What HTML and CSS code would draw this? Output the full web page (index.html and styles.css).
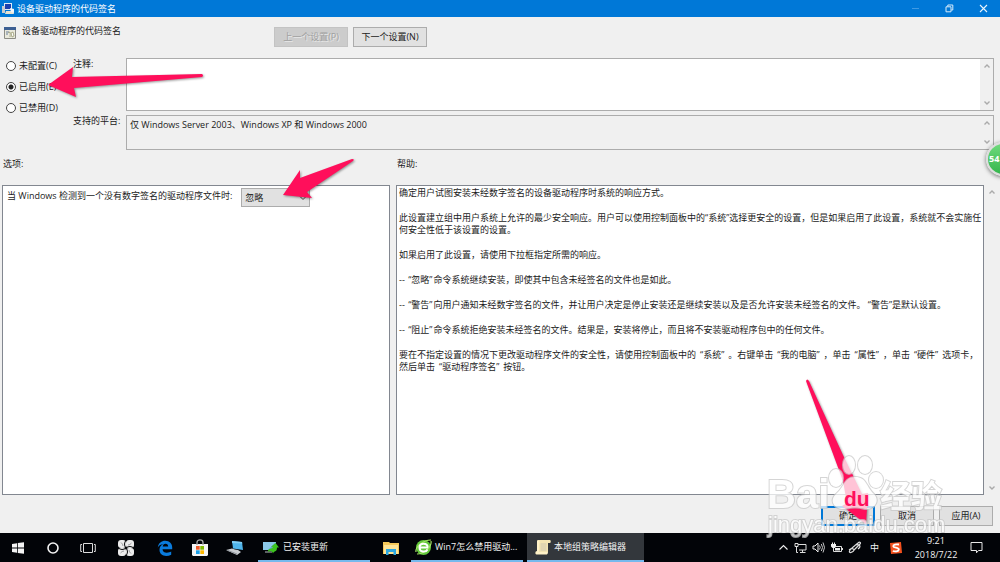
FILE: index.html
```html
<!DOCTYPE html>
<html lang="zh-CN">
<head>
  <meta charset="UTF-8" />
  <meta name="viewport" content="width=device-width, initial-scale=1.0" />
  <title>设备驱动程序的代码签名</title>
  <link rel="stylesheet" href="styles.css">
</head>
<body>
  <header class="titlebar">
    <svg class="title-icon" width="13" height="13" viewBox="0 0 13 13">
      <path d="M2 1h8v7H2z" fill="#dfe9f5"/><path d="M3 2h6v5H3z" fill="#1b3fae"/>
      <path d="M0 4h3v7H0z" fill="#c9ccd0"/><path d="M4 9h7l1 3H3z" fill="#e8e2d0"/><path d="M8 6l4 1v4l-3-1z" fill="#f2f4f8"/>
    </svg>
    <h1>设备驱动程序的代码签名</h1>
    <div class="window-buttons">
      <button aria-label="最小化" disabled><svg width="9" height="9" viewBox="0 0 9 9"><path d="M1 4.5h7" stroke="#3f9ae4"/></svg></button>
      <button aria-label="还原"><svg width="9" height="9" viewBox="0 0 9 9"><path d="M1 2.8h5v5H1zM2.8 2.5V1h5v5H6.2" fill="none" stroke="#d8ecfb"/></svg></button>
      <button aria-label="关闭"><svg width="9" height="9" viewBox="0 0 9 9"><path d="M1 1l7 7M8 1L1 8" stroke="#e8f4fd" stroke-width="1.1"/></svg></button>
    </div>
  </header>

  <main class="dialog">
    <div class="policy-head">
      <div class="policy-name">
        <svg width="12" height="12" viewBox="0 0 12 12">
          <path d="M.5.5h11v11H.5z" fill="#e9e9dc" stroke="#8d8d86"/><path d="M0 0h12v3H0z" fill="#3d5f92"/>
          <path d="M2 5h3M2 7h2" stroke="#6b7f9c"/><path d="M4 6l2-1v5M7 6l2-1 1 4-2 1z" fill="#fff" stroke="#8b8d5f" stroke-width=".7"/>
        </svg>
        <h2>设备驱动程序的代码签名</h2>
      </div>
      <button class="btn nav-btn" disabled>上一个设置(P)</button>
      <button class="btn nav-btn">下一个设置(N)</button>
    </div>

    <div class="state">
      <div class="radios">
        <label><input type="radio" name="state"> 未配置(C)</label>
        <label><input type="radio" name="state" checked> 已启用(E)</label>
        <label><input type="radio" name="state"> 已禁用(D)</label>
      </div>
      <div class="fields">
        <label for="comment">注释:</label>
        <div class="scroll-box comment">
          <textarea id="comment"></textarea>
          <div class="scrollbar">
            <svg width="8" height="6" viewBox="0 0 8 6"><path d="M1.500 4.500L4 2l2.500 2.500"/></svg>
            <svg width="8" height="6" viewBox="0 0 8 6"><path d="M1.500 1.500L4 4l2.500-2.500"/></svg>
          </div>
        </div>
        <label for="platform">支持的平台:</label>
        <div class="scroll-box platform">
          <textarea id="platform" readonly>仅 Windows Server 2003、Windows XP 和 Windows 2000</textarea>
          <div class="scrollbar">
            <svg width="8" height="6" viewBox="0 0 8 6"><path d="M1.500 4.500L4 2l2.500 2.500"/></svg>
            <svg width="8" height="6" viewBox="0 0 8 6"><path d="M1.500 1.500L4 4l2.500-2.500"/></svg>
          </div>
        </div>
      </div>
    </div>

    <div class="panels">
      <section class="options">
        <h3>选项:</h3>
        <div class="panel option-row">
          <label for="action">当 Windows 检测到一个没有数字签名的驱动程序文件时:</label>
          <div class="select-wrap">
            <select id="action">
              <option>忽略</option>
              <option>警告</option>
              <option>阻止</option>
            </select>
            <svg width="8" height="6" viewBox="0 0 8 6"><path d="M1 1.500L4 4.500l3-3"/></svg>
          </div>
        </div>
      </section>
      <section class="help">
        <h3>帮助:</h3>
        <div class="help-body">
          <div class="panel help-text">
            <p>确定用户试图安装未经数字签名的设备驱动程序时系统的响应方式。</p>
            <p>此设置建立组中用户系统上允许的最少安全响应。用户可以使用控制面板中的“系统”选择更安全的设置，但是如果启用了此设置，系统就不会实施任<br>何安全性低于该设置的设置。</p>
            <p>如果启用了此设置，请使用下拉框指定所需的响应。</p>
            <p>-- <span class="term">“忽略”</span>命令系统继续安装，即使其中包含未经签名的文件也是如此。</p>
            <p>-- <span class="term">“警告”</span>向用户通知未经数字签名的文件，并让用户决定是停止安装还是继续安装以及是否允许安装未经签名的文件。 “警告”是默认设置。</p>
            <p>-- <span class="term">“阻止”</span>命令系统拒绝安装未经签名的文件。结果是，安装将停止，而且将不安装驱动程序包中的任何文件。</p>
            <p class="steps">要在不指定设置的情况下更改驱动程序文件的安全性，请使用控制面板中的<span class="term">“系统”</span>。右键单击<span class="term">“我的电脑”</span>，单击<span class="term">“属性”</span>，单击<span class="term">“硬件”</span>选项卡，<br>然后单击<span class="term">“驱动程序签名”</span>按钮。</p>
          </div>
          <div class="scrollbar">
            <svg width="8" height="6" viewBox="0 0 8 6"><path d="M1.500 4.500L4 2l2.500 2.500"/></svg>
            <svg width="8" height="6" viewBox="0 0 8 6"><path d="M1.500 1.500L4 4l2.500-2.500"/></svg>
          </div>
        </div>
      </section>
    </div>

    <div class="actions">
      <button class="btn primary">确定</button>
      <button class="btn">取消</button>
      <button class="btn">应用(A)</button>
    </div>
  </main>

  <footer class="taskbar">
    <nav class="launchers">
      <button aria-label="开始"><svg width="14" height="14" viewBox="0 0 14 14"><path d="M1 3l5-.8v4.400H1zM6.800 2.100L13 1.200v5.400H6.800zM1 7.400h5v4.400L1 11zM6.800 7.400H13v5.400l-6.200-.9z" fill="#f4f4f4"/></svg></button>
      <button aria-label="搜索"><svg width="14" height="14" viewBox="0 0 14 14"><circle cx="7" cy="7" r="5" fill="none" stroke="#f4f4f4" stroke-width="1.600"/></svg></button>
      <button aria-label="任务视图"><svg width="16" height="14" viewBox="0 0 16 14"><path d="M3.500 2.500h9v9h-9zM2 3.500H.7v7H2M14 3.500h1.300v7H14" fill="none" stroke="#dcdcdc"/></svg></button>
      <button aria-label="浏览器" class="wide"><svg width="18" height="18" viewBox="0 0 18 18">
        <g fill="#ececec"><rect x="1" y="1" width="8" height="8" rx="3"/><rect x="9" y="1" width="8" height="8" rx="3"/><rect x="9" y="9" width="8" height="8" rx="3"/><rect x="1" y="9" width="8" height="8" rx="3"/></g>
        <path d="M9 9C7 7 7 3 9.500 1M9 9c2-2 6-2 8 .5M9 9c2 2 2 6-.5 8M9 9c-2 2-6 2-8-.5" fill="none" stroke="#050608"/>
        <path d="M11 6q2 0 3.500-2M12 11q0 2 2 3.500M7 12q-2 0-3.500 2M6 7q0-2-2-3.500" fill="none" stroke="#77797c" stroke-width=".7"/>
      </svg></button>
      <button aria-label="Edge"><svg width="16" height="16" viewBox="0 0 16 16"><path d="M.8 7.500C1.500 3 4.500.8 8.200.8c4.500 0 7 3 7 6.700v1.800H5.500c.2 2.500 2 3.400 4.300 3.400 1.700 0 3.200-.5 4.400-1.200v3.200c-1.500.8-3.200 1.200-5 1.200-4 0-6.700-2.300-6.700-6.200 0-2.500 1.500-4.700 3.800-5.600C3.800 4.400 2 5.500.8 7.500zM5.700 6.500h5.500c0-1.700-.9-2.800-2.600-2.800S5.900 4.800 5.700 6.500z" fill="#0a7bdc"/></svg></button>
      <button aria-label="应用商店"><svg width="18" height="18" viewBox="0 0 18 18"><path d="M1 5h16v11l-1 1H2l-1-1z" fill="#f5f5f5"/><path d="M6 6V3.500C6 0 12 0 12 3.500V6" fill="none" stroke="#a9a9a9" stroke-width="1.300"/><path d="M5 7h3.700v3.700H5z" fill="#f05a28"/><path d="M9.300 7H13v3.700H9.300z" fill="#7fba00"/><path d="M5 11.300h3.700V15H5z" fill="#1ba0e8"/><path d="M9.300 11.300H13V15H9.300z" fill="#ffb900"/></svg></button>
      <button aria-label="此电脑"><svg width="18" height="16" viewBox="0 0 18 16"><path d="M6 1l10 1 1 8-10-1.500z" fill="#4fb4ea"/><path d="M6 1l10 1 .3 1.500L6 3z" fill="#82cdf3"/><path d="M0 10l6-1.500 3 1 3 .5 3 2-4 3z" fill="#c9cdd1"/><path d="M2 10.500l9 3.500" stroke="#8b9096"/></svg></button>
    </nav>
    <div class="tasks">
      <button class="task">
        <svg width="18" height="16" viewBox="0 0 18 16"><path d="M1 3h13v8H1z" fill="#62a9d4"/><path d="M1 3h13L6 11H1z" fill="#8bc8e8"/><path d="M3 13h7" stroke="#b8bcc0"/><path d="M6 13c0-5 4-2 5-5l-2-.3L13.500 4 17 8.500h-2c0 5-3 3-4 6-1-3-3-3-5-1.500z" fill="#3cc41f"/></svg>
        <span>已安装更新</span>
      </button>
      <button class="folder" aria-label="文件资源管理器"><svg width="16" height="14" viewBox="0 0 16 14"><path d="M0 1h6l1 1h9v11H0z" fill="#f5c95a"/><path d="M1 4h14v9H1z" fill="#ffe597"/><path d="M3 14V8h10v6h-2.500v-3h-5v3z" fill="#2da8e1"/></svg></button>
      <button class="task">
        <svg width="17" height="17" viewBox="0 0 17 17"><circle cx="8.500" cy="8.500" r="7.500" fill="#63c83c"/><path d="M1 13C0 8 8 1 16 1M16 2c1 5-6 13-14 13" fill="none" stroke="#a5e464" stroke-width="1.200"/><path d="M13 8.500H4.500M4.500 8.500c0-5 8.200-5 8.200 0M4.500 8.500c0 5 6.500 5 8 2" fill="none" stroke="#fff" stroke-width="2"/></svg>
        <span>Win7怎么禁用驱动...</span>
      </button>
      <button class="task active">
        <svg width="16" height="16" viewBox="0 0 16 16"><path d="M3 1h12c1 0 1 3 0 3h-2v9H4z" fill="#f4e5b3"/><path d="M2.500 1C5 1 5 4 4 5v8h9c0 2-1 2.500-2 2.500H1.500C0 15.500 0 12 2 12V2z" fill="#fff2c8"/><path d="M5.500 5h6M5.500 7h6M5.500 9h6M5.500 11h6" stroke="#c5bfae" stroke-width=".8"/></svg>
        <span>本地组策略编辑器</span>
      </button>
    </div>
    <div class="tray">
      <svg width="11" height="13" viewBox="0 0 11 13"><path d="M1.500 8.500l4-4 4 4" fill="none" stroke="#eee" stroke-width="1.100"/></svg>
      <svg width="13" height="13" viewBox="0 0 13 13"><path d="M4 3.500h8v5.500H5M8.500 9v2.500M6 11.500h5.500M1 2.500h3v3H1zM2.500 5.500v6H4" fill="none" stroke="#ddd"/></svg>
      <svg width="13" height="13" viewBox="0 0 13 13"><path d="M1 5h2l3-3v9L3 8H1z" fill="none" stroke="#eee"/><path d="M7.500 4.500q1.500 2 0 4M9.300 3q2.500 3.500 0 7M11 1.500q3 5 0 10" fill="none" stroke="#ddd" stroke-width=".9"/></svg>
      <svg width="13" height="13" viewBox="0 0 13 13"><path d="M3.500 5.500h8v5h-8zM12.500 7v2" fill="none" stroke="#ddd"/><path d="M5 7h5v2.500H5zM1 3h5v2.500L5 7H2.500L1 5.500z" fill="#eee"/><path d="M2.500 1.500V3M4.500 1.500V3" stroke="#eee"/></svg>
      <svg width="14" height="13" viewBox="0 0 14 13"><path d="M1 9c4-3 7 0 3 2s-3-2 0-4l6-5c2-2 3 0 2 1L6 9M7 4c4-1 7 1 3 4" fill="none" stroke="#ddd" stroke-width="1.200"/></svg>
      <span class="ime">中</span>
      <svg class="sogou" width="12" height="12" viewBox="0 0 12 12"><path d="M0 1l11-1 1 11-11 1z" fill="#f4511e"/><path d="M9 2.500C6 2 3 2.500 3.300 4.300 3.500 6 9 5.500 8.800 7.500 8.500 9.500 5 9.800 2.800 9" fill="none" stroke="#fff" stroke-width="1.800"/></svg>
      <time class="clock"><span>9:21</span><span>2018/7/22</span></time>
      <svg width="13" height="13" viewBox="0 0 13 13"><path d="M1 1.500h11v8H8.500L6.500 11.800V9.500H1z" fill="none" stroke="#e8e8e8"/></svg>
    </div>
  </footer>

  <svg class="arrow arrow-enabled" width="160" height="36" viewBox="0 0 160 36"><path d="M2 20L27 2l-1 10L156 9q2 1.500 0 3L28 23l2 9z"/></svg>
  <svg class="arrow arrow-select" width="76" height="44" viewBox="0 0 76 44"><path d="M3 37L20 12v8L72 1q3 0 1 2L27 34l5 6z"/></svg>
  <svg class="arrow arrow-ok" width="68" height="148" viewBox="0 0 68 148"><path d="M1 2q1-3 3 0L38 76l19 39 6-1-2 31-24-18 5-3-4-22z"/></svg>

  <svg class="watermark" width="184" height="88" viewBox="0 0 184 88">
    <g class="mark">
      <ellipse cx="72" cy="28" rx="7" ry="9"/>
      <ellipse cx="85" cy="15" rx="6" ry="9"/>
      <ellipse cx="101" cy="15" rx="7" ry="9"/>
      <ellipse cx="112" cy="30" rx="7" ry="8"/>
      <path d="M91 27c12 0 11 10 19 17 7 8-1 16-9 15-8-2-12-2-20 0-9 1-17-7-9-15 8-6 8-17 19-17z"/>
      <text class="brand" x="3" y="58">Bai</text>
      <text class="brand-cn" x="116" y="57">经验</text>
      <text class="site" x="4" y="82">jingyan.baidu.com</text>
    </g>
    <text class="du" x="80" y="56">du</text>
  </svg>
  <button class="badge" aria-label="54%">54</button>
</body>
</html>
```
FILE: styles.css
```css
:root {
  --bg: #f0f0f0;
  --blue: #0078d7;
  --border: #acacac;
  --button: #e1e1e1;
  --pink: #ff0f5b;
  --text: #1a1a1a;
}

* {
  box-sizing: border-box;
}

body {
  margin: 0;
  min-height: 100vh;
  position: relative;
  display: flex;
  flex-direction: column;
  overflow: hidden;
  background: var(--bg);
  color: var(--text);
  font: 9px/12px "Open Sans", "Noto Sans CJK SC", sans-serif;
}

h1, h2, h3, p {
  margin: 0;
  font-size: 9px;
  font-weight: normal;
}

button, select, textarea {
  font: inherit;
  color: inherit;
}

button {
  padding: 0;
  border: none;
  background: none;
}

/* title bar */
.titlebar {
  display: flex;
  align-items: center;
  height: 17px;
  padding-left: 2px;
  background: var(--blue);
  color: #fff;
}
.titlebar h1 {
  margin-left: 2px;
}
.window-buttons {
  display: flex;
  margin-left: auto;
}
.window-buttons button {
  display: flex;
  align-items: center;
  justify-content: center;
  width: 34px;
  height: 16px;
}

/* dialog */
.dialog {
  flex: 1;
  display: flex;
  flex-direction: column;
}
.policy-head {
  display: flex;
  gap: 5px;
  padding: 10px 4px 0;
}
.policy-name {
  display: flex;
  gap: 6px;
  width: 265px;
}
.policy-name h2 {
  margin-top: -2px;
}
.btn {
  height: 20px;
  background: var(--button);
  border: 1px solid var(--border);
  line-height: 16px;
}
.btn:disabled {
  background: #ccc;
  border-color: #c3c3c3;
  color: #a0a0a0;
  text-shadow: 1px 1px #e8e8e8;
}
.nav-btn {
  width: 74px;
}
.policy-name svg {
  flex: none;
}

.state {
  display: flex;
  padding: 11px 6px 0;
}
.radios {
  display: flex;
  flex-direction: column;
  gap: 9px;
  width: 67px;
  padding-top: 2px;
}
.radios label {
  display: flex;
  align-items: center;
  gap: 3px;
  white-space: nowrap;
}
.radios input {
  appearance: none;
  width: 10px;
  height: 10px;
  margin: 0;
  border: 1px solid #444;
  border-radius: 50%;
  background: #fff;
}
.radios input:checked {
  background: radial-gradient(circle, #222 2px, #fff 3px);
}
.fields {
  flex: 1;
  display: grid;
  grid-template-columns: 53px 1fr;
  row-gap: 4px;
}
.scroll-box {
  display: flex;
  border: 1px solid var(--border);
}
.comment {
  height: 53px;
  background: #fff;
}
.platform {
  height: 35px;
}
.scroll-box textarea {
  flex: 1;
  border: none;
  outline: none;
  resize: none;
  padding: 3px;
  background: none;
  overflow: hidden;
}
.scrollbar {
  display: flex;
  flex-direction: column;
  align-items: center;
  justify-content: space-between;
  width: 13px;
  padding: 4px 0;
  background: var(--bg);
}
.scrollbar path, .select-wrap path {
  fill: none;
  stroke: #aaa;
  stroke-width: 1.4;
}

.panels {
  flex: 1;
  display: grid;
  grid-template-columns: 388fr 604fr;
  gap: 6px;
  padding: 8px 0 0 2px;
}
.options, .help {
  display: flex;
  flex-direction: column;
}
.panels h3 {
  padding-left: 1px;
  margin-bottom: 15px;
}
.panel {
  flex: 1;
  border: 1px solid #828790;
  background: #fff;
}
.option-row {
  display: flex;
  align-items: flex-start;
  gap: 9px;
  padding: 2px 4px;
}
.option-row label {
  margin-top: 2px;
  white-space: nowrap;
}
.select-wrap {
  position: relative;
  display: flex;
}
.select-wrap select {
  appearance: none;
  width: 69px;
  height: 19px;
  padding: 0 3px;
  border: 1px solid var(--border);
  border-radius: 0;
  background: var(--button);
}
.select-wrap svg {
  position: absolute;
  right: 3px;
  top: 7px;
}
.select-wrap path {
  stroke: #444;
  stroke-width: 1;
}
.help-body {
  flex: 1;
  display: flex;
}
.help-body .scrollbar {
  width: 16px;
}
.help-text {
  padding: 1px 0 2px 2px;
  white-space: nowrap;
}
.help-text p + p {
  margin-top: 13px;
}
.term {
  margin: 0 1px;
}
.steps .term {
  margin: 0 4px;
}

.actions {
  display: flex;
  justify-content: flex-end;
  gap: 5px;
  padding: 11px 7px 7px;
}
.actions .btn {
  width: 54px;
}
.actions .primary {
  border: 2px solid var(--blue);
}

/* taskbar */
.taskbar {
  display: flex;
  height: 29px;
  background: #020408;
  color: #f2f2f2;
}
.launchers {
  display: flex;
  width: 258px;
}
.launchers button {
  display: flex;
  align-items: center;
  justify-content: center;
  width: 35px;
}
.launchers button.wide {
  width: 42px;
}
.tasks {
  display: flex;
  gap: 4px;
}
.task {
  display: flex;
  align-items: center;
  gap: 3px;
  width: 112px;
  padding: 1px 4px 0;
  border-bottom: 2px solid #76b9ed;
  white-space: nowrap;
}
.task.active {
  width: 117px;
  padding-left: 8px;
  background: #33373c;
}
.folder {
  display: flex;
  align-items: center;
  justify-content: center;
  width: 33px;
}
.tray {
  display: flex;
  align-items: center;
  gap: 5px;
  margin-left: auto;
  padding-right: 17px;
}
.ime {
  margin-left: 3px;
}
.sogou {
  margin-left: 6px;
}
.clock {
  display: flex;
  flex-direction: column;
  width: 58px;
  line-height: 14px;
  text-align: center;
}

/* overlays */
.arrow {
  position: absolute;
  fill: var(--pink);
  filter: drop-shadow(1px 1px 1px #0006);
  pointer-events: none;
}
.arrow-enabled {
  left: 46px;
  top: 65px;
}
.arrow-select {
  left: 280px;
  top: 158px;
}
.arrow-ok {
  right: 127px;
  bottom: 35px;
}
.watermark {
  position: absolute;
  right: 52px;
  bottom: 24px;
  pointer-events: none;
}
.mark {
  fill: #fff;
  stroke: #c8c8c8;
  stroke-width: 2;
  paint-order: stroke;
  opacity: 0.75;
}
.brand {
  font: bold 40px "Liberation Sans", sans-serif;
}
.brand-cn {
  font: bold 31px "Noto Sans CJK SC", sans-serif;
}
.site {
  font: 22px "Liberation Sans", sans-serif;
}
.du {
  font: bold 21px "Liberation Sans", sans-serif;
  fill: var(--pink);
}
.badge {
  position: absolute;
  right: -20px;
  top: 142px;
  width: 34px;
  height: 34px;
  padding-left: 1px;
  border: 2px solid #ddd;
  border-radius: 50%;
  background: linear-gradient(#6fda7c, #35b64d);
  box-shadow: 0 1px 4px #0008;
  color: #fff;
  font-weight: bold;
  text-align: left;
}
```
